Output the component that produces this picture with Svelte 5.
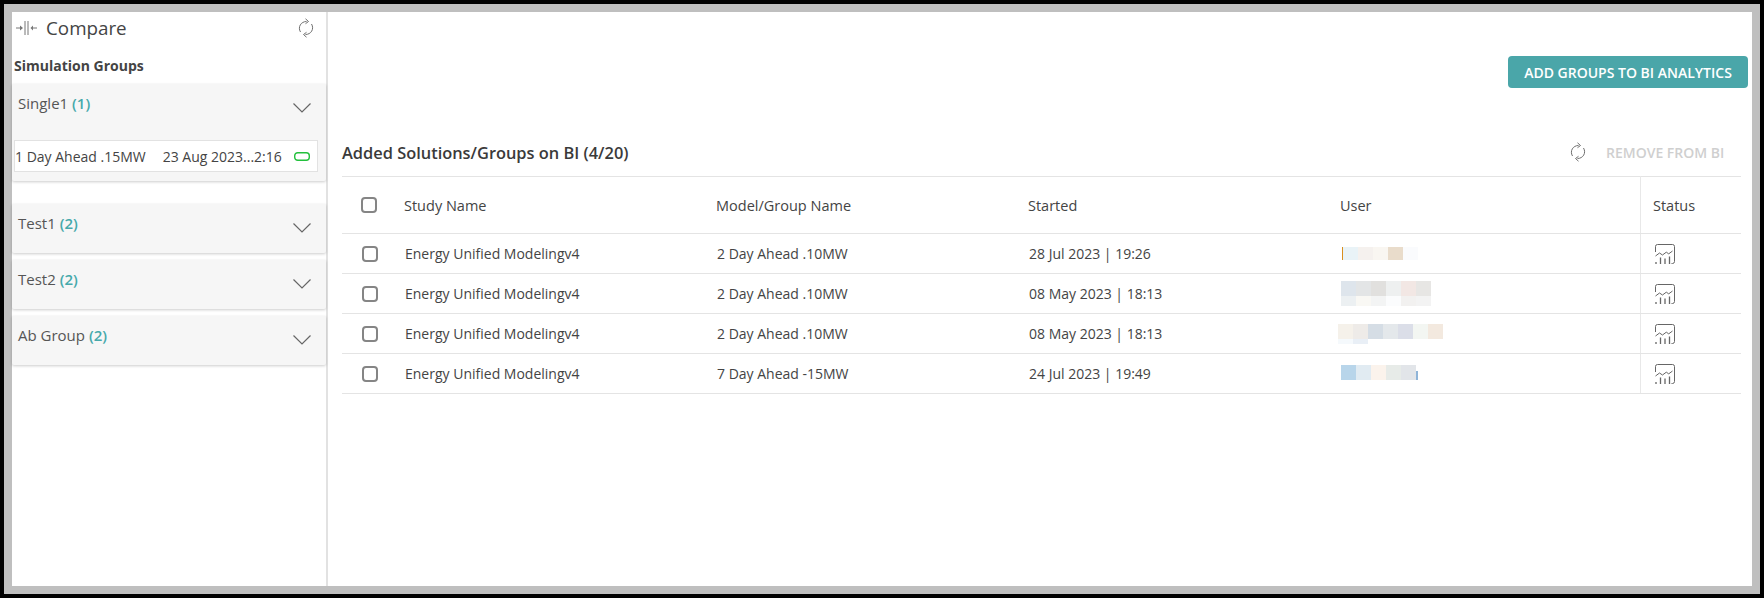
<script>
  const groups = [
    { name: 'Single1', count: 1, open: true },
    { name: 'Test1', count: 2 },
    { name: 'Test2', count: 2 },
    { name: 'Ab Group', count: 2 }
  ];

  // user names are blurred in the source, so each row is just colour blocks
  const rows = [
    {
      study: 'Energy Unified Modelingv4', model: '2 Day Ahead .10MW', started: '28 Jul 2023 | 19:26', cls: 'u1',
      blur: [['#e9f3f7', '#f5f1ee', '#f9f6f1', '#e9dccb', '#fafbfd']]
    },
    {
      study: 'Energy Unified Modelingv4', model: '2 Day Ahead .10MW', started: '08 May 2023 | 18:13', cls: 'u2',
      blur: [['#dee5ec', '#e3e5e6', '#e1e0de', '#eef0f0', '#f2e7e4', '#e7e6e4'], ['#ecf0f2', '#f9f8f4', '#f3f4f4', '#fbfcfd', '#f2f1f0', '#f3f3f3']]
    },
    {
      study: 'Energy Unified Modelingv4', model: '2 Day Ahead .10MW', started: '08 May 2023 | 18:13', cls: 'u3',
      blur: [['#f5f1ea', '#eeebe8', '#d5dde5', '#e4e8eb', '#dbdee8', '#f3f6f2', '#f3e9df'], ['#f5f9fc', '#e9eff6']]
    },
    {
      study: 'Energy Unified Modelingv4', model: '7 Day Ahead -15MW', started: '24 Jul 2023 | 19:49', cls: 'u4',
      blur: [['#b8d5ea', '#e1ebf2', '#fbf3ec', '#e7ebe8', '#e2e5e9']]
    }
  ];
</script>

{#snippet refresh()}
  <svg class="refresh" viewBox="0 0 16 20" fill="none" stroke="#6f6f6f" stroke-width="1">
    <path d="M2.5 14C-.5 9 3 3.5 8.5 3.5" />
    <path d="M7.5 .8l3 2.7-3 2.2" />
    <path d="M13.5 6C16.5 11 13 16.500 7.5 16.5" />
    <path d="M8.5 19.2l-3-2.7 3-2.2" />
  </svg>
{/snippet}

<div class="frame">
  <div class="page">
    <aside class="side">
      <div class="side-head">
        <svg class="compare-icon" viewBox="0 0 21 16" fill="none" stroke="#777" stroke-width="1">
          <path d="M0 8h4" />
          <path d="M4 5.5L7 8l-3 2.5z" fill="#777" stroke="none" />
          <path d="M9 1v14M12 1v14" />
          <path d="M21 8h-4" />
          <path d="M17 5.5L14.5 8l2.5 2.5z" fill="#777" stroke="none" />
        </svg>
        <span class="compare">Compare</span>
        {@render refresh()}
      </div>
      <div class="side-title">Simulation Groups</div>

      {#each groups as g}
        <section class="group" class:open={g.open}>
          <div class="group-head">
            <span class="group-name">{g.name} <b>({g.count})</b></span>
            <svg class="chev" viewBox="0 0 18 10" fill="none" stroke="#666" stroke-width="1.2">
              <path d="M.5 .5l8.5 8.5 8.5-8.5" />
            </svg>
          </div>
          {#if g.open}
            <div class="solution">
              <span>1 Day Ahead .15MW</span>
              <span class="date">23 Aug 2023...2:16</span>
              <svg class="pill" viewBox="0 0 16 9" fill="none" stroke="#22c03c" stroke-width="1.4">
                <rect x=".7" y=".7" width="14.6" height="7.6" rx="3" />
              </svg>
            </div>
          {/if}
        </section>
      {/each}
    </aside>

    <main class="main">
      <div class="top">
        <button class="add">ADD GROUPS TO BI ANALYTICS</button>
      </div>

      <div class="title-row">
        <h2>Added Solutions/Groups on BI (4/20)</h2>
        {@render refresh()}
        <span class="remove">REMOVE FROM BI</span>
      </div>

      <table>
        <thead>
          <tr>
            <th class="check"><span class="box"></span></th>
            <th class="col">Study Name</th>
            <th class="col">Model/Group Name</th>
            <th class="col">Started</th>
            <th class="user">User</th>
            <th class="status">Status</th>
          </tr>
        </thead>
        <tbody>
          {#each rows as r}
            <tr>
              <td class="check"><span class="box"></span></td>
              <td class="col">{r.study}</td>
              <td class="col">{r.model}</td>
              <td class="col">{r.started}</td>
              <td class="user">
                <div class="blur {r.cls}">
                  {#each r.blur as strip}
                    <div class="strip">
                      {#each strip as c}
                        <i style="background: {c}"></i>
                      {/each}
                    </div>
                  {/each}
                </div>
              </td>
              <td class="status">
                <svg class="chart" viewBox="0 0 20 20" fill="none" stroke="#666" stroke-width="1">
                  <path d="M.5 8V2.5a2 2 0 0 1 2-2h15a2 2 0 0 1 2 2v15a2 2 0 0 1-2 2h-1" />
                  <path d="M.5 12l4-3 3 2 4-3 2 2 4-3" />
                  <path d="M1 18v2M5.5 13.5v6.5M10 14.5v5.5M14.5 12.5v7.5" stroke-width="1.3" />
                </svg>
              </td>
            </tr>
          {/each}
        </tbody>
      </table>
    </main>
  </div>
</div>

<style>
  :global(body) {
    margin: 0;
    font-family: 'Open Sans', sans-serif;
    color: #444;
  }

  .frame {
    box-sizing: border-box;
    width: 1764px;
    height: 598px;
    border: 4px solid #000;
    background: #bfbfbf;
    padding: 8px;
  }

  .page {
    display: flex;
    height: 574px;
    background: #fff;
  }

  .side {
    box-sizing: border-box;
    width: 316px;
    flex-shrink: 0;
    border-right: 2px solid #e2e2e2;
  }

  .side-head {
    display: flex;
    align-items: center;
    height: 31px;
    padding: 0 12px 0 4px;
  }

  .compare-icon {
    width: 21px;
    height: 16px;
  }

  .compare {
    flex: 1;
    margin-left: 9px;
    font-size: 18.8px;
  }

  .refresh {
    width: 16px;
    height: 20px;
  }

  .side-title {
    margin: 13px 0 9px 2px;
    font-size: 14px;
    line-height: 19px;
    font-weight: 700;
    color: #444;
  }

  .group {
    height: 49px;
    margin-bottom: 7px;
    background: #f6f6f6;
    border-bottom-left-radius: 2px;
    border-bottom-right-radius: 2px;
    box-shadow: 0 1px 3px rgba(0, 0, 0, 0.2);
  }

  .group.open {
    height: 97px;
    margin-bottom: 23px;
  }

  .group-head {
    display: flex;
    justify-content: space-between;
    padding: 10px 15px 0 6px;
  }

  .group-name {
    font-size: 15px;
    line-height: 19px;
    color: #555;
  }

  .group-name b {
    font-weight: 600;
    color: #46a9ab;
  }

  .chev {
    width: 18px;
    height: 10px;
    margin-top: 9px;
  }

  .solution {
    box-sizing: border-box;
    display: flex;
    align-items: center;
    width: 304px;
    height: 32px;
    margin: 27px 0 0 2px;
    background: #fff;
    border: 1px solid #e2e2e2;
    font-size: 14px;
    white-space: nowrap;
  }

  .date {
    margin-left: 17px;
  }

  .pill {
    width: 16px;
    height: 9px;
    margin-left: 12px;
  }

  .main {
    flex: 1;
    padding: 0 4px 0 14px;
  }

  .top {
    display: flex;
    justify-content: flex-end;
    padding-top: 44px;
  }

  .add {
    width: 240px;
    height: 32px;
    padding: 0;
    border: 0;
    border-radius: 4px;
    background: #4aa6a9;
    color: #fff;
    font-family: inherit;
    font-size: 14px;
    font-weight: 600;
    white-space: nowrap;
  }

  .title-row {
    display: flex;
    align-items: center;
    width: 1398px;
    height: 48px;
    margin-top: 40px;
  }

  h2 {
    flex: 1;
    margin: 0;
    font-size: 16.4px;
    font-weight: 600;
    color: #3a3a3a;
  }

  .remove {
    width: 118px;
    margin: 0 16px 0 20px;
    font-size: 14px;
    font-weight: 600;
    color: #cfcfcf;
    white-space: nowrap;
  }

  table {
    width: 1398px;
    table-layout: fixed;
    border-collapse: collapse;
    font-size: 14px;
    border-top: 1px solid #e4e4e4;
  }

  th {
    height: 56px;
    padding: 0;
    font-weight: 400;
    font-size: 14.5px;
    text-align: left;
    border-bottom: 1px solid #e4e4e4;
    color: #444;
  }

  td {
    height: 39px;
    padding: 0 0 0 1px;
    border-bottom: 1px solid #e4e4e4;
  }

  .check {
    width: 62px;
    padding: 0 0 0 19px;
    box-sizing: border-box;
  }

  .box {
    display: block;
    box-sizing: border-box;
    width: 16px;
    height: 16px;
    border: 2px solid #858585;
    border-radius: 4px;
  }

  td .box {
    margin-left: 1px;
  }

  .col {
    width: 312px;
  }

  .user {
    width: 300px;
  }

  .status {
    width: 100px;
    box-sizing: border-box;
    padding-left: 12px;
    border-left: 1px solid #e8e8e8;
  }

  .chart {
    display: block;
    width: 20px;
    height: 20px;
    margin-left: 2px;
  }

  .strip {
    display: flex;
  }

  .strip i {
    display: block;
    width: 15px;
    height: 15px;
  }

  .u1 {
    height: 13px;
    overflow: hidden;
    border-left: 1px solid #d98f1f;
    margin-left: 1px;
  }

  .u2 .strip:last-child i {
    height: 10px;
  }

  .u3 {
    margin-left: -3px;
  }

  .u3 .strip:last-child i {
    height: 5px;
  }

  .u4 {
    margin-top: -3px;
  }

  .u4 .strip::after {
    content: '';
    align-self: flex-end;
    width: 2px;
    height: 9px;
    background: #8fb4d8;
  }
</style>
